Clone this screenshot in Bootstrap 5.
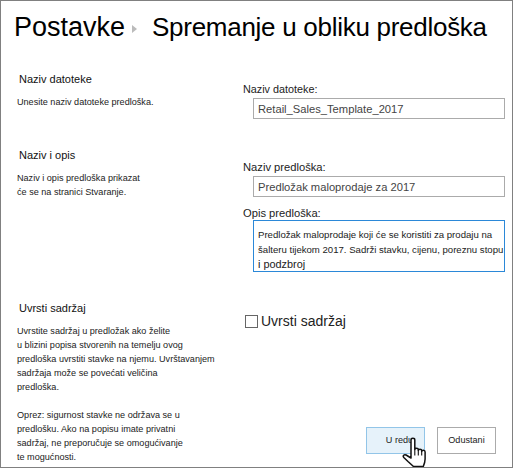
<!DOCTYPE html>
<html lang="hr">
<head>
<meta charset="utf-8">
<link href="https://cdn.jsdelivr.net/npm/bootstrap@5.3.0/dist/css/bootstrap.min.css" rel="stylesheet">
<style>
html,body{margin:0;background:#fff;overflow:hidden}
body{font-family:"Liberation Sans",Arial,sans-serif;color:#222}
.frame{width:513px;height:468px;border:1.5px solid #808080;position:relative;overflow:hidden}
.hd{padding:0 0 9px 13px;height:61px;font-size:27px;line-height:36px;color:#000}
.hd-b{font-size:26px;letter-spacing:-.28px}
.crumb-sep{width:0;height:0;border-left:5px solid #bbb;border-top:4px solid transparent;border-bottom:4px solid transparent;margin:4px 15px 0 7px}
.lcol{width:241px;flex:none;padding-left:16px}
.rcol{flex:1;padding-left:1px}
.ttl{font-size:11px;line-height:16px;padding-left:2px;color:#111}
.dsc{font-size:9.1px;line-height:14px;margin:0;color:#222}
.lbl{font-size:11.2px;line-height:17px;color:#222;display:block;margin:0}
.lbl-tight{font-size:10.8px}
.lbl-opis{margin:8px 0 -2px}
.fld{display:block;width:252px;margin-left:10px;border:1px solid #ababab;font-size:11.2px;color:#444;padding:0 4px;background:#fff;white-space:nowrap;overflow:hidden}
.fld-s{height:21px;line-height:20px}
.fld-a{height:52px;border-color:#2b88d8;color:#222;font-size:9.6px;line-height:15px;padding-top:6px}
.big-line{font-size:10.9px}
.s1{height:85px;padding-top:9px}
.s2{height:153px}
.s3{height:165px}
.pad-r1{padding-top:2px}
.pad-r2{padding-top:4px}
.chk{width:13px;height:13px;border:1px solid #666;flex:none;background:#fff}
.chk-row{margin:13px 0 0 2px;gap:3px}
.chk-t{font-size:14px;line-height:16px;color:#222}
.btn-row{gap:12px;padding:0 16px 11px 0}
.act{width:59px;height:27px;font-size:9.1px;line-height:25px;padding:0;border-radius:0;text-align:center;color:#222;background:#fff;border:1px solid #ababab}
.act-on{background:#e6f2fa;border-color:#92c5e8;padding-left:8px}
.hand{position:absolute;left:401px;top:436px}
</style>
</head>
<body>
<div class="frame">
  <div class="hd d-flex align-items-center">
    <span>Postavke</span><span class="crumb-sep"></span><span class="hd-b">Spremanje u obliku predloška</span>
  </div>
  <div class="s1 d-flex">
    <div class="lcol">
      <div class="ttl">Naziv datoteke</div>
      <p class="dsc mt-2">Unesite naziv datoteke predloška.</p>
    </div>
    <div class="rcol pad-r1">
      <label class="lbl lbl-tight mt-2">Naziv datoteke:</label>
      <div class="fld fld-s">Retail_Sales_Template_2017</div>
    </div>
  </div>
  <div class="s2 d-flex">
    <div class="lcol">
      <div class="ttl">Naziv i opis</div>
      <p class="dsc mt-2">Naziv i opis predloška prikazat<br>će se na stranici Stvaranje.</p>
    </div>
    <div class="rcol pad-r2">
      <label class="lbl mt-2">Naziv predloška:</label>
      <div class="fld fld-s">Predložak maloprodaje za 2017</div>
      <label class="lbl lbl-opis">Opis predloška:</label>
      <div class="fld fld-a">Predložak maloprodaje koji će se koristiti za prodaju na<br>šalteru tijekom 2017. Sadrži stavku, cijenu, poreznu stopu<br><span class="big-line">i podzbroj</span></div>
    </div>
  </div>
  <div class="s3 d-flex">
    <div class="lcol">
      <div class="ttl">Uvrsti sadržaj</div>
      <p class="dsc mt-2">Uvrstite sadržaj u predložak ako želite<br>u blizini popisa stvorenih na temelju ovog<br>predloška uvrstiti stavke na njemu. Uvrštavanjem<br>sadržaja može se povećati veličina<br>predloška.<br><br>Oprez: sigurnost stavke ne održava se u<br>predlošku. Ako na popisu imate privatni<br>sadržaj, ne preporučuje se omogućivanje<br>te mogućnosti.</p>
    </div>
    <div class="rcol d-flex flex-column">
      <div class="d-flex align-items-center chk-row">
        <span class="chk"></span><span class="chk-t">Uvrsti sadržaj</span>
      </div>
      <div class="d-flex justify-content-end mt-auto btn-row">
        <button type="button" class="btn act act-on">U redu</button>
        <button type="button" class="btn act">Odustani</button>
      </div>
    </div>
  </div>
  <svg class="hand" width="27" height="31" viewBox="0 0 27 31" aria-hidden="true">
    <path d="M9 3c0-2.200 3.800-2.200 3.800 0v9.500c0-1.800 3.500-1.800 3.500 0v1c0-1.800 3.400-1.800 3.400 0v1c0-1.800 3.400-1.600 3.400.5V22c0 3-.8 5-1.800 7.500H11.500L6 24.500 1.800 20.500c-1.500-1.800.5-3.500 2.300-2.500L9 21Z" fill="#fff" stroke="#111" stroke-width="1.500" stroke-linejoin="round"/>
    <path d="M12.800 12.500v6M16.300 13.500v5M19.700 14.500v4" stroke="#111" stroke-width="1.100"/>
  </svg>
</div>
</body>
</html>
